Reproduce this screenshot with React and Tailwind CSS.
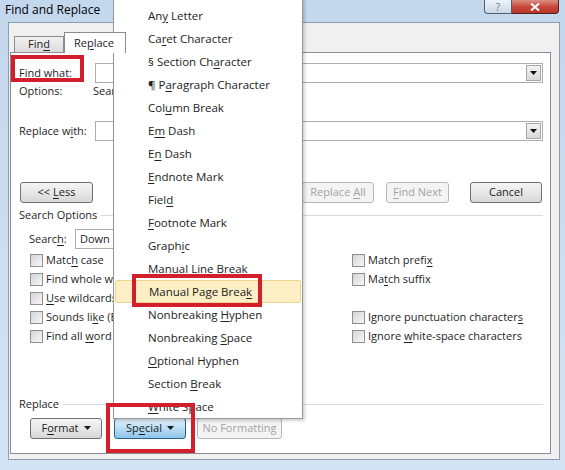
import React from 'react';

const K = ({ children }) => <span className="underline underline-offset-[2px]">{children}</span>;

const Btn = ({ children, className = '', kind = 'normal' }) => {
  const styles = {
    normal: 'border-[#707070] bg-linear-to-b from-[#f4f4f4] via-[#e8e8e8] to-[#d6d6d6] text-[#1a1a1a]',
    disabled: 'border-[#b5b8bb] bg-[#f4f4f4] text-[#a3a3a3]',
    pressed: 'border-[#2c628b] bg-linear-to-b from-[#e3f1fb] via-[#b9dcf4] to-[#8fc4e8] text-[#1a1a1a]',
  };
  return (
    <div className={`flex items-center justify-center h-[21px] rounded-[3px] border whitespace-nowrap ${styles[kind]} ${className}`}>
      <span>{children}</span>
    </div>
  );
};

const Caret = () => (
  <svg width="7" height="4" viewBox="0 0 7 4" className="inline-block align-middle ml-[5px] mb-[2px]">
    <path d="M0 0h7L3.5 4z" fill="#1a1a1a" />
  </svg>
);

const Check = ({ children }) => (
  <div className="flex items-center h-[19px] gap-[3px]">
    <span className="w-[13px] h-[13px] shrink-0 border border-[#8e8f8f] bg-linear-to-br from-[#d4d4d4] to-[#f8f8f8]" />
    <span className="whitespace-nowrap">{children}</span>
  </div>
);

const Combo = ({ className = '' }) => (
  <div className={`h-[20px] border border-[#abadb3] bg-white flex justify-end items-center pr-px ${className}`}>
    <div className="w-[15px] h-[16px] border border-[#a7a7a7] bg-linear-to-b from-[#f3f3f3] to-[#d9d9d9] flex items-center justify-center">
      <svg width="7" height="4" viewBox="0 0 7 4"><path d="M0 0h7L3.5 4z" fill="#111" /></svg>
    </div>
  </div>
);

const menuItems = [
  <>An<K>y</K> Letter</>,
  <>Ca<K>r</K>et Character</>,
  <>§ Section Ch<K>a</K>racter</>,
  <>¶ P<K>a</K>ragraph Character</>,
  <>Col<K>u</K>mn Break</>,
  <>E<K>m</K> Dash</>,
  <>E<K>n</K> Dash</>,
  <><K>E</K>ndnote Mark</>,
  <>Fiel<K>d</K></>,
  <><K>F</K>ootnote Mark</>,
  <>Graph<K>i</K>c</>,
  <>Manual <K>L</K>ine Break</>,
  <>Manual Page Brea<K>k</K></>,
  <>Nonbreaking <K>H</K>yphen</>,
  <>Nonbreaking <K>S</K>pace</>,
  <><K>O</K>ptional Hyphen</>,
  <>Section <K>B</K>reak</>,
  <><K>W</K>hite Space</>,
];

export default function App() {
  return (
    <div className="relative w-[565px] h-[470px] overflow-hidden bg-linear-to-b from-[#c3d7ed] to-[#d4e3f3] font-['Open_Sans',sans-serif] text-[11px] text-[#1e1e1e] flex flex-col">
      {/* title bar */}
      <div className="h-[22px] flex items-start shrink-0">
        <div className="pl-[5px] pt-[1px] text-[12px] text-black">Find and Replace</div>
        <div className="ml-auto mr-[6px] flex">
          <div className="w-[28px] h-[14px] border border-t-0 border-[#4f5f73] rounded-bl-[4px] bg-linear-to-b from-[#eef3f9] to-[#cad7e5] flex items-center justify-center text-[10px] leading-none text-[#6b7683]">?</div>
          <div className="w-[47px] h-[14px] border border-t-0 border-l-0 border-[#4a2420] rounded-br-[4px] bg-linear-to-b from-[#dd8f84] via-[#c8493c] to-[#b8352a] flex items-center justify-center">
            <svg width="10" height="8" viewBox="0 0 10 8"><path d="M1 0.5l8 7M9 0.5l-8 7" stroke="#fff" strokeWidth="2" /></svg>
          </div>
        </div>
      </div>

      {/* client area */}
      <div className="ml-[8px] mr-[5px] h-[438px] bg-[#f0f0f0] border border-[#8d9db0] flex flex-col pl-px">
        {/* tabs */}
        <div className="flex items-end h-[29px] pl-[4px]">
          <div className="w-[50px] h-[16px] border border-b-0 border-[#898c95] bg-linear-to-b from-[#f2f2f2] to-[#dcdcdc] flex items-center justify-center">
            <span>Fin<K>d</K></span>
          </div>
          <div className="relative z-10 -mb-px w-[62px] h-[21px] border border-b-0 border-[#898c95] bg-white pl-[9px] flex items-center">
            <span>Re<K>p</K>lace</span>
          </div>
        </div>

        {/* tab panel */}
        <div className="w-[541px] h-[402px] border border-[#898c95] bg-white flex flex-col">
          <div className="mt-[10px] flex items-center h-[20px]">
            <div className="w-[84px] pl-[8px]">Fi<K>n</K>d what:</div>
            <Combo className="w-[448px]" />
          </div>
          <div className="flex items-center h-[16px]">
            <div className="w-[82px] pl-[8px]">Options:</div>
            <div className="w-[20px] overflow-hidden whitespace-nowrap">Search Down</div>
          </div>
          <div className="mt-[22px] flex items-center h-[20px]">
            <div className="w-[84px] pl-[8px]">Replace w<K>i</K>th:</div>
            <Combo className="w-[448px]" />
          </div>

          <div className="mt-[41px] flex items-center pl-[9px] pr-[8px]">
            <Btn className="w-[73px]">&lt;&lt; <K>L</K>ess</Btn>
            <div className="ml-auto flex">
              <Btn kind="disabled" className="w-[72px] ml-[10px]">Replace <K>A</K>ll</Btn>
              <Btn kind="disabled" className="w-[63px] ml-[12px]"><K>F</K>ind Next</Btn>
              <Btn className="w-[72px] ml-[21px]">Cancel</Btn>
            </div>
          </div>

          <div className="mt-[4px] h-[16px] flex items-center pl-[8px] pr-[7px]">
            <span>Search Options</span>
            <span className="flex-1 h-px bg-[#d5d9dd] ml-[4px]" />
          </div>

          <div className="mt-[6px] flex items-center h-[20px]">
            <div className="w-[64px] pl-[18px]">Searc<K>h</K>:</div>
            <div className="w-[38px] h-[20px] border border-r-0 border-[#abadb3] flex items-center pl-[4px]">Down</div>
          </div>

          <div className="mt-[2px] flex">
            <div className="w-[102px] pl-[19px] flex flex-col overflow-hidden">
              <Check>Matc<K>h</K> case</Check>
              <Check>Find whole w<K>o</K>rds only</Check>
              <Check><K>U</K>se wildcards</Check>
              <Check>Sounds li<K>k</K>e (English)</Check>
              <Check>Find all <K>w</K>ord forms (English)</Check>
            </div>
            <div className="ml-[239px] flex flex-col">
              <Check>Match prefi<K>x</K></Check>
              <Check>Ma<K>t</K>ch suffix</Check>
              <div className="h-[19px]" />
              <Check>Ignore punctuation character<K>s</K></Check>
              <Check>Ignore <K>w</K>hite-space characters</Check>
            </div>
          </div>

          <div className="mt-[50px] h-[16px] flex items-center pl-[8px] pr-[7px]">
            <span>Replace</span>
            <span className="flex-1 h-px bg-[#d5d9dd] ml-[4px]" />
          </div>

          <div className="mt-[6px] flex items-center pl-[19px]">
            <Btn className="w-[72px]">F<K>o</K>rmat<Caret /></Btn>
            <Btn kind="pressed" className="w-[72px] ml-[12px]">Sp<K>e</K>cial<Caret /></Btn>
            <Btn kind="disabled" className="w-[85px] ml-[11px]">No Formatting</Btn>
          </div>
        </div>
      </div>

      {/* dropdown menu of Special */}
      <div className="absolute left-[113px] top-[-2px] w-[190px] h-[421px] bg-white border border-[#979797] shadow-[2px_2px_3px_rgba(0,0,0,0.18)] pt-[5px] text-[11.5px] text-[#222]">
        {menuItems.map((item, i) => (
          <div
            key={i}
            className={`h-[23px] mx-px flex items-center pl-[33px] whitespace-nowrap ${i === 12 ? 'border border-[#eed48a] bg-[#fcefc6] rounded-[2px]' : ''}`}
          >
            <span>{item}</span>
          </div>
        ))}
      </div>

      {/* red highlight boxes */}
      <div className="absolute left-[11px] top-[55px] w-[73px] h-[27px] border-[4px] border-[#d21f2b]" />
      <div className="absolute left-[132px] top-[274px] w-[130px] h-[33px] border-[4px] border-[#d21f2b]" />
      <div className="absolute left-[106px] top-[403px] w-[89px] h-[50px] border-[4px] border-[#d21f2b]" />
    </div>
  );
}
